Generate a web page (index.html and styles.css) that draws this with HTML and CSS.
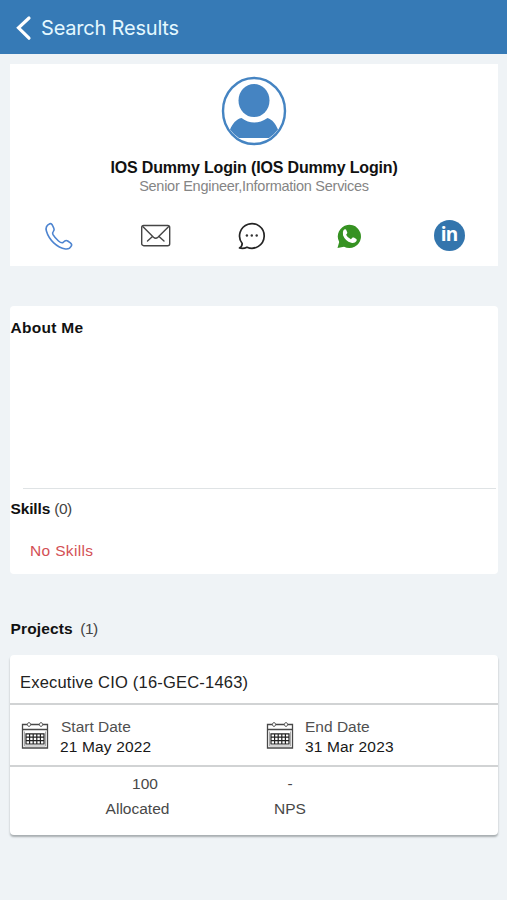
FILE: index.html
```html
<!DOCTYPE html>
<html lang="en">
<head>
<meta charset="utf-8">
<title>Search Results</title>
<link rel="stylesheet" href="styles.css">
</head>
<body>
<header class="topbar">
  <svg class="back" width="16" height="26" viewBox="0 0 16 26"><path d="M13 3 2.500 12.800 13 23.200" fill="none" stroke="#fff" stroke-width="3.200" stroke-linecap="round" stroke-linejoin="miter"/></svg>
  <h1 class="title">Search Results</h1>
</header>
<main class="content">
  <section class="profile">
    <svg class="avatar" width="66" height="70" viewBox="0 0 66 70">
      <ellipse cx="33" cy="35" rx="31" ry="33" fill="#fff" stroke="#4584c2" stroke-width="2.400"/>
      <ellipse cx="33" cy="24.500" rx="15.500" ry="16.500" fill="#4584c2"/>
      <path d="M20.500 42q12.500 9 26 0c5 1.500 8 6 10.500 11.500Q53 59 48 62H18Q13 59 9 53.500C11.500 48 15 43 20.500 42z" fill="#4584c2"/>
    </svg>
    <h2 class="name">IOS Dummy Login (IOS Dummy Login)</h2>
    <p class="role">Senior Engineer,Information Services</p>
    <nav class="actions">
      <svg width="32" height="32" viewBox="0 0 32 32"><path d="M6.800 3.800Q2 6 3.400 11C6 20 14 27.500 22.500 29Q26.500 29.500 28.300 26Q29.300 24.200 27.400 22.800L24.700 21Q23.200 20 21.800 21L19.800 22.700Q18 23.200 15.500 21Q12 18 10 14.700Q9 12.800 10.300 11.500Q11.700 10 10.800 8.200L9.300 5Q8.300 3.200 6.800 3.800z" fill="none" stroke="#4d84d0" stroke-width="1.600" stroke-linejoin="round"/></svg>
      <svg width="32" height="32" viewBox="0 0 32 32"><g fill="none" stroke="#454545" stroke-width="1.400" stroke-linecap="round" stroke-linejoin="round"><rect x="1.700" y="5.500" width="28" height="20.200" rx="2"/><path d="m3 6.700 10.500 10.500q2.200 2 4.400 0L28.500 6.700M12.500 16.500l-5 4.500M19 16.500l5 4.500"/></g></svg>
      <svg width="32" height="32" viewBox="0 0 32 32"><path d="M6.200 23.500A12.300 12.300 0 1 1 11 27.200Q7.500 29 3.500 28Q6.200 26.500 6.200 23.500z" fill="none" stroke="#242424" stroke-width="1.700" stroke-linejoin="round"/><g fill="#333"><circle cx="10.900" cy="15.500" r="1.200"/><circle cx="15.800" cy="15.500" r="1.200"/><circle cx="20.700" cy="15.500" r="1.200"/></g></svg>
      <svg width="32" height="32" viewBox="0 0 32 32"><path d="M4.500 28 6.200 22A11.600 11.600 0 1 1 11 26.700z" fill="#369222"/><path d="M10.500 10.300q1-1.400 2.500-.7l1.300 3q.2.800-1.200 2.200 1.400 3.200 4.800 4.500l1.700-1.700q.6-.4 1.300 0l2.400 1.300q.8.600.2 2-1.700 2.900-5.300 1.900-6-1.900-8.200-7.600-.7-2.900.5-4.900z" fill="#fff"/></svg>
      <span class="linkedin">in</span>
    </nav>
  </section>

  <section class="about">
    <h3 class="heading about-title">About Me</h3>
    <div class="skills">
      <h3 class="heading skills-title">Skills <span class="count">(0)</span></h3>
      <p class="empty">No Skills</p>
    </div>
  </section>

  <h3 class="heading projects">Projects <span class="count">(1)</span></h3>
  <section class="project">
    <h4 class="project-name">Executive CIO (16-GEC-1463)</h4>
    <div class="dates">
      <div class="date">
        <svg class="calendar" width="28" height="28" viewBox="0 0 28 28"><g fill="none" stroke="#484848"><path d="M1.500 3.500h25v23.500h-25zM1.500 8.500h25" stroke-width="1.300"/><path d="M3.500 10.500v14.500h21V10.500" stroke="#aaa"/><path d="M5 12.800h18v10.200H5zM5 16.200h18M5 19.600h18M8.600 12.800V23M12.200 12.800V23M15.800 12.800V23M19.400 12.800V23" stroke="#222" stroke-width="1.200"/></g><g fill="#fff" stroke="#666"><ellipse cx="8" cy="3.500" rx="1.500" ry="2"/><ellipse cx="20" cy="3.500" rx="1.500" ry="2"/></g></svg>
        <div><p class="label">Start Date</p><p class="value">21 May 2022</p></div>
      </div>
      <div class="date">
        <svg class="calendar" width="28" height="28" viewBox="0 0 28 28"><g fill="none" stroke="#484848"><path d="M1.500 3.500h25v23.500h-25zM1.500 8.500h25" stroke-width="1.300"/><path d="M3.500 10.500v14.500h21V10.500" stroke="#aaa"/><path d="M5 12.800h18v10.200H5zM5 16.200h18M5 19.600h18M8.600 12.800V23M12.200 12.800V23M15.800 12.800V23M19.400 12.800V23" stroke="#222" stroke-width="1.200"/></g><g fill="#fff" stroke="#666"><ellipse cx="8" cy="3.500" rx="1.500" ry="2"/><ellipse cx="20" cy="3.500" rx="1.500" ry="2"/></g></svg>
        <div><p class="label end">End Date</p><p class="value">31 Mar 2023</p></div>
      </div>
    </div>
    <div class="stats">
      <div class="stat"><p class="amount">100</p><p class="caption">Allocated</p></div>
      <div class="stat"><p>-</p><p>NPS</p></div>
    </div>
  </section>
</main>
</body>
</html>
```

FILE: styles.css
```css
* { box-sizing: border-box; margin: 0; padding: 0; }
body { min-height: 900px; background: #eff3f6; color: #111; font-family: "Liberation Sans", Arial, sans-serif; font-size: 16px; }
svg { display: block; }
.topbar { height: 54px; padding: 1px 16px 0; display: flex; align-items: center; gap: 9px; background: #367ab6; color: #e4f8ff; }
.title { font: 400 20px/28px Inter, sans-serif; letter-spacing: -.2px; }
.content { padding: 10px 9px 0 10px; }
.profile { height: 202px; background: #fff; padding-top: 12px; }
.avatar { margin: 0 auto; }
.name { margin-top: 12px; line-height: 20px; font-size: 16px; letter-spacing: -.16px; text-align: center; white-space: nowrap; }
.role { margin-top: -1px; line-height: 18px; font-size: 14.5px; letter-spacing: -.27px; color: #858585; text-align: center; }
.actions { margin-top: 25px; display: grid; grid-template-columns: 97px 97px 96px 97px 1fr; justify-items: center; align-items: center; }
.linkedin { width: 31px; height: 31px; margin: -1px 0 0 3px; border-radius: 50%; background: #3375ad; color: #fff; text-align: center; font: 700 19px/28px "Open Sans", sans-serif; letter-spacing: -.8px; }
.about { height: 268px; margin-top: 40px; background: #fff; border-radius: 4px; padding-top: 12px; }
.heading { padding-left: .5px; font-size: 15.5px; line-height: 20px; }
.about-title { letter-spacing: .3px; }
.skills-title { letter-spacing: -.15px; }
.count { font-weight: 400; letter-spacing: -.5px; color: #444; }
.skills { margin-top: 150px; }
.skills::before { content: ""; display: block; height: 1px; margin: 0 2px 10px 13px; background: #dfe3e5; }
.empty { margin: 22px 0 0 20px; line-height: 20px; font-size: 15.5px; letter-spacing: .35px; color: #d34f55; }
.projects { margin: 45px 0 16px; letter-spacing: .15px; }
.projects .count { margin-left: 3px; }
.project { height: 180px; background: #fff; border-radius: 4px; box-shadow: 0 2px 2px #a7adb0; }
.project-name { height: 48px; padding-left: 10px; line-height: 55px; font-weight: 400; font-size: 16.5px; letter-spacing: .2px; color: #222; }
.dates { height: 64px; display: grid; grid-template-columns: 245px 1fr; border-top: 2px solid #d1d3d4; border-bottom: 2px solid #d1d3d4; }
.date { display: flex; gap: 11px; padding: 12px 0 0 11px; line-height: 20px; }
.calendar { margin-top: 4px; }
.label { color: #505050; padding-left: 1px; font-size: 15.5px; }
.end { padding-left: 0; }
.value { color: #181818; font-size: 15.5px; letter-spacing: .15px; }
.stats { display: grid; grid-template-columns: 255px 50px; padding-top: 4px; line-height: 25px; font-size: 15.5px; color: #484848; text-align: center; }
.amount { padding-left: 15px; }
```
